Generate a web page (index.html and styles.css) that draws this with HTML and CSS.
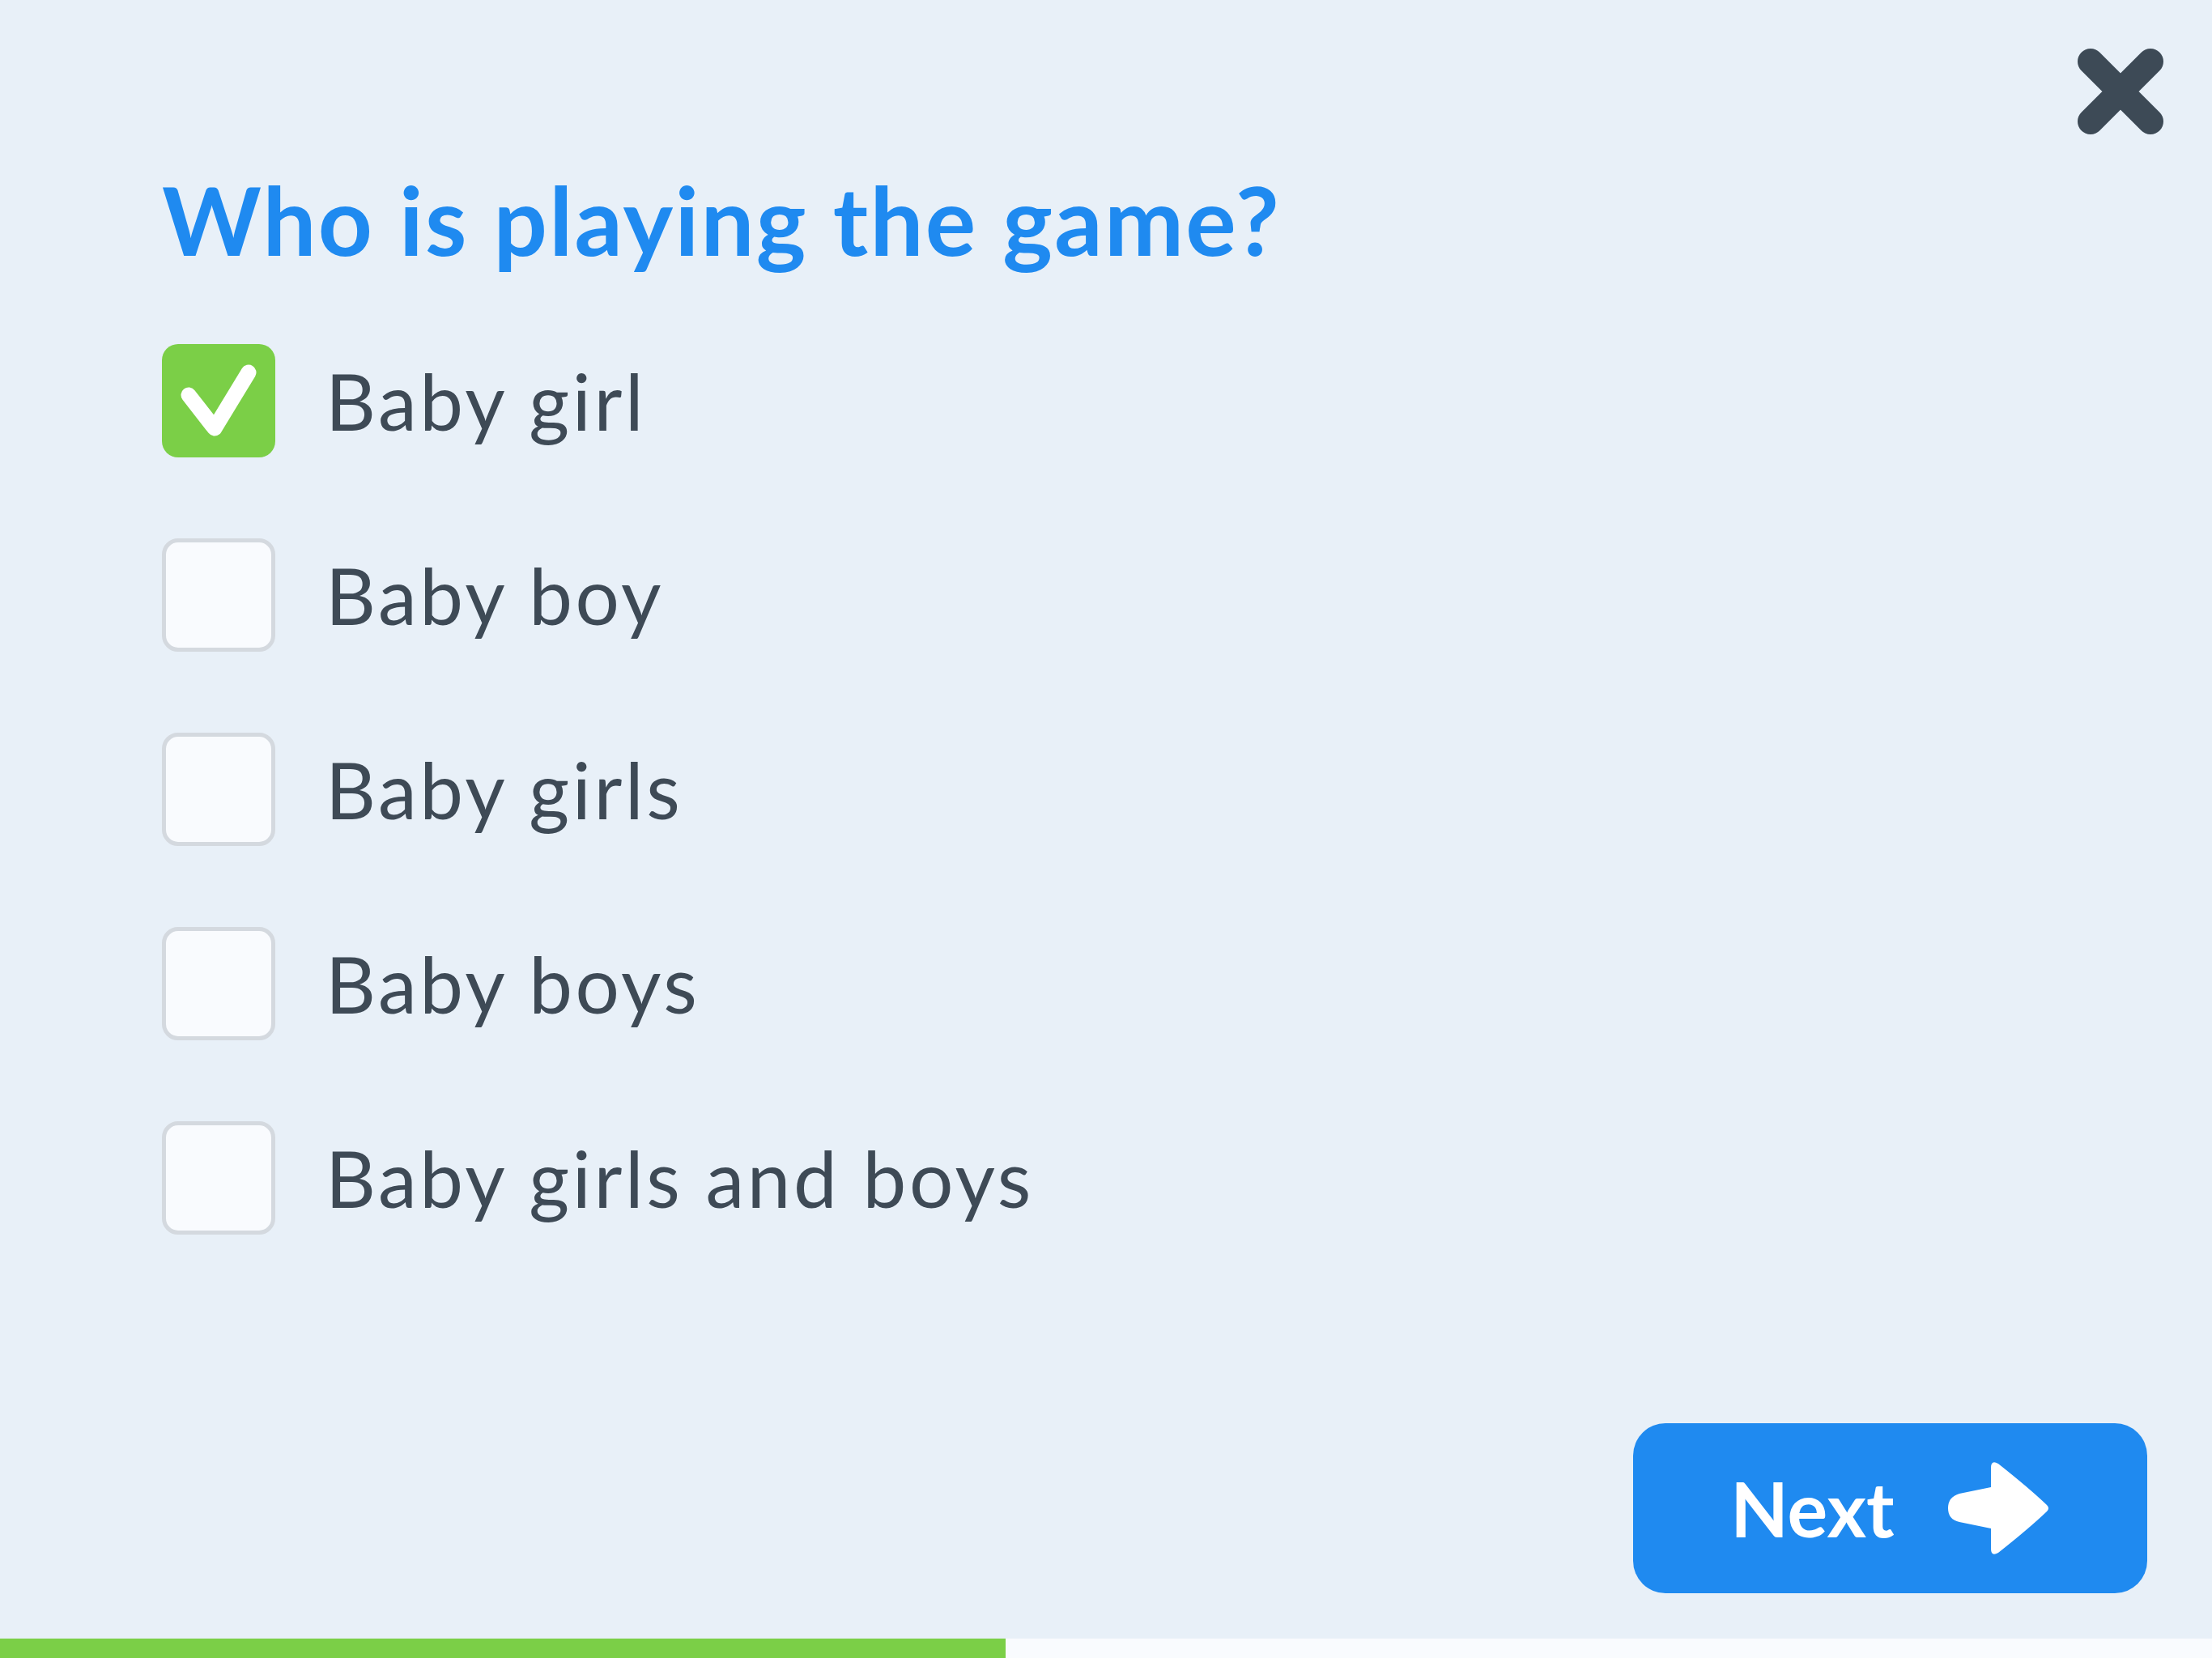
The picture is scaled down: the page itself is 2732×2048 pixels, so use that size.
FILE: index.html
```html
<!DOCTYPE html>
<html lang="en">
<head>
<meta charset="utf-8">
<title>Who is playing the game?</title>
<link rel="stylesheet" href="styles.css">
</head>
<body>
<div class="screen">
  <button class="close" aria-label="Close">
    <svg width="106" height="106" viewBox="0 0 106 106"><path d="M16 16 L90 90 M90 16 L16 90" stroke="#3d4a56" stroke-width="32" stroke-linecap="round" fill="none"/></svg>
  </button>
  <main class="content">
    <h1 class="title">Who is playing the game?</h1>
    <ul class="options">
      <li class="option">
        <span class="box box-checked">
          <svg width="140" height="140" viewBox="0 0 140 140"><path d="M33 63 L65 104 L107 35" stroke="#fff" stroke-width="19" stroke-linecap="round" stroke-linejoin="round" fill="none"/></svg>
        </span>
        <span class="label">Baby girl</span>
      </li>
      <li class="option"><span class="box"></span><span class="label">Baby boy</span></li>
      <li class="option"><span class="box"></span><span class="label">Baby girls</span></li>
      <li class="option"><span class="box"></span><span class="label">Baby boys</span></li>
      <li class="option"><span class="box"></span><span class="label">Baby girls and boys</span></li>
    </ul>
  </main>
  <footer class="footer">
    <button class="next">
      <span class="next-text">Next</span>
      <svg width="126" height="118" viewBox="0 0 126 118"><path d="M53 9 Q53 -1 62 4 Q100 34 122 55 Q126 59 122 63 Q100 84 62 114 Q53 119 53 109 L53 84 L14 76 Q0 73 0 59 Q0 45 14 41 L53 33 Z" fill="#fff"/></svg>
    </button>
  </footer>
  <div class="progress"><div class="progress-fill" style="width:45.46%"></div></div>
</div>
</body>
</html>
```

FILE: styles.css
```css
* { box-sizing: border-box; }
html, body { margin: 0; padding: 0; }
body {
  background: #e8f0f8;
  font-family: "Lato", "Noto Sans", sans-serif;
  color: #3e4a56;
}
.screen {
  position: relative;
  width: 2732px;
  height: 2048px;
  display: flex;
  flex-direction: column;
  overflow: hidden;
}
.close {
  position: absolute;
  top: 60px;
  right: 60px;
  width: 106px;
  height: 106px;
  padding: 0;
  border: 0;
  background: none;
  display: flex;
}
.content {
  padding: 213px 0 0 200px;
}
.title {
  margin: 0 0 45px 0;
  font-size: 117px;
  line-height: 1;
  font-weight: 700;
  color: #1f8af0;
  letter-spacing: 2.3px;
}
.options {
  list-style: none;
  margin: 0;
  padding: 0;
}
.option {
  height: 240px;
  display: flex;
  align-items: center;
  gap: 62px;
}
.box {
  width: 140px;
  height: 140px;
  flex: none;
  border-radius: 20px;
  border: 5px solid #d4d9df;
  background: #f9fbfe;
}
.box-checked {
  border: 0;
  background: #7bcf47;
  display: flex;
}
.label {
  font-size: 96px;
  line-height: 1;
  font-weight: 400;
  letter-spacing: 3.6px;
}
.footer {
  margin-top: auto;
  display: flex;
  justify-content: flex-end;
  padding: 0 80px 56px 0;
}
.next {
  width: 635px;
  height: 210px;
  border: 0;
  border-radius: 40px;
  background: #1f8af0;
  color: #fff;
  display: flex;
  align-items: center;
  justify-content: center;
  gap: 66px;
  font-family: inherit;
  padding: 0;
}
.next-text {
  font-size: 93px;
  font-weight: 700;
  line-height: 1;
}
.progress {
  height: 24px;
  background: #f9fbfe;
  flex: none;
}
.progress-fill {
  height: 100%;
  background: #7bcf47;
}
```
